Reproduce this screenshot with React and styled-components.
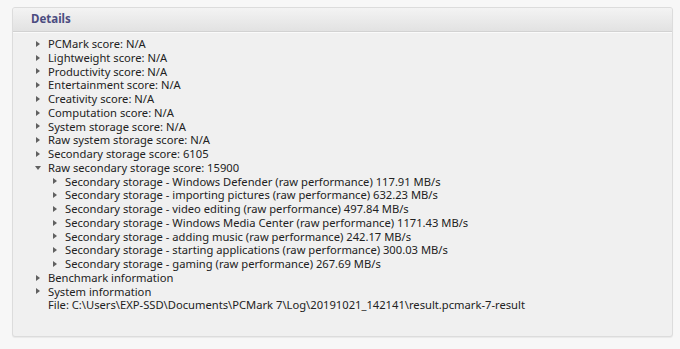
import React from 'react';
import styled, { createGlobalStyle } from 'styled-components';

const GlobalStyle = createGlobalStyle`
  html, body {
    margin: 0;
    padding: 0;
    background: #f7f7f7;
  }
  body {
    font-family: "Noto Sans", "Open Sans", sans-serif;
  }
`;

const topItems = [
  { label: 'PCMark score: N/A' },
  { label: 'Lightweight score: N/A' },
  { label: 'Productivity score: N/A' },
  { label: 'Entertainment score: N/A' },
  { label: 'Creativity score: N/A' },
  { label: 'Computation score: N/A' },
  { label: 'System storage score: N/A' },
  { label: 'Raw system storage score: N/A' },
  { label: 'Secondary storage score: 6105' },
  {
    label: 'Raw secondary storage score: 15900',
    open: true,
    children: [
      'Secondary storage - Windows Defender (raw performance) 117.91 MB/s',
      'Secondary storage - importing pictures (raw performance) 632.23 MB/s',
      'Secondary storage - video editing (raw performance) 497.84 MB/s',
      'Secondary storage - Windows Media Center (raw performance) 1171.43 MB/s',
      'Secondary storage - adding music (raw performance) 242.17 MB/s',
      'Secondary storage - starting applications (raw performance) 300.03 MB/s',
      'Secondary storage - gaming (raw performance) 267.69 MB/s',
    ],
  },
  { label: 'Benchmark information' },
  { label: 'System information' },
];

const App = () => {
  return (
    <>
      <GlobalStyle />
      <Page>
        <Panel>
          <Header>Details</Header>
          <Body>
            <Tree>
              {topItems.map((item, index) => (
                <li key={index}>
                  <Row>
                    <Caret open={item.open} />
                    <Label>{item.label}</Label>
                  </Row>
                  {item.children && (
                    <SubTree>
                      {item.children.map((child, i) => (
                        <li key={i}>
                          <Row>
                            <Caret />
                            <Label>{child}</Label>
                          </Row>
                        </li>
                      ))}
                    </SubTree>
                  )}
                </li>
              ))}
            </Tree>
            <FileLine>
              File: C:\Users\EXP-SSD\Documents\PCMark 7\Log\20191021_142141\result.pcmark-7-result
            </FileLine>
          </Body>
        </Panel>
      </Page>
    </>
  );
};

const Page = styled.div`
  width: 680px;
  height: 349px;
  padding: 7px 7px 0 12px;
  box-sizing: border-box;
`;

const Panel = styled.div`
  width: 661px;
  height: 330px;
  box-sizing: border-box;
  background: #f0f0f0;
  border: 1px solid #dcdcdc;
  border-radius: 3px;
  box-shadow: 0 1px 1px rgba(0, 0, 0, 0.06);
  overflow: hidden;
`;

const Header = styled.div`
  height: 23px;
  line-height: 22px;
  padding-left: 18px;
  font-size: 11.5px;
  font-weight: bold;
  color: #4b4c80;
  background: linear-gradient(#f3f3f3, #e2e2e2);
  border-bottom: 1px solid #d2d2d2;
  box-shadow: 0 1px 0 #fafafa;
`;

const Body = styled.div`
  padding: 5px 0 0 22px;
  font-size: 11.2px;
  line-height: 13.75px;
  color: #222;
`;

const Tree = styled.ul`
  list-style: none;
  margin: 0;
  padding: 0;
`;

const SubTree = styled.ul`
  list-style: none;
  margin: 0;
  padding: 0 0 0 17px;
`;

const Row = styled.div`
  display: flex;
  align-items: center;
  height: 13.75px;
  white-space: nowrap;
`;

const Label = styled.span`
  line-height: 13.75px;
`;

const Caret = styled.span`
  width: 13px;
  flex: none;
  display: flex;
  align-items: center;
  justify-content: flex-start;

  &::before {
    content: '';
    display: block;
    margin-left: ${({ open }) => (open ? '0' : '1px')};
    ${({ open }) =>
      open
        ? `border-left: 3.5px solid transparent;
           border-right: 3.5px solid transparent;
           border-top: 4px solid #606060;`
        : `border-top: 3.5px solid transparent;
           border-bottom: 3.5px solid transparent;
           border-left: 4px solid #606060;`}
  }
`;

const FileLine = styled.div`
  padding-left: 13px;
  height: 13.75px;
  white-space: nowrap;
`;

export default App;
